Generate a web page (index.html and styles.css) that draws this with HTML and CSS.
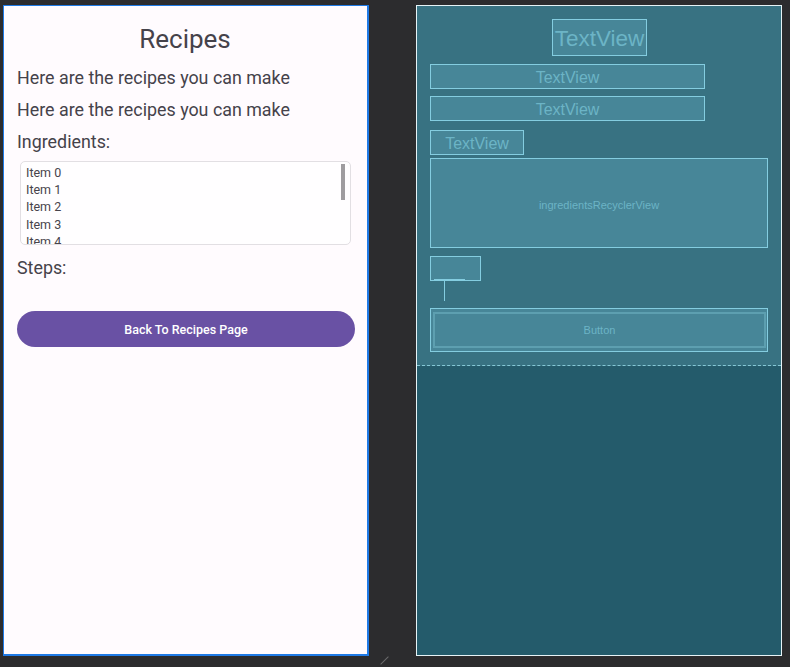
FILE: index.html
```html
<!DOCTYPE html>
<html>
<head>
<meta charset="utf-8">
<link rel="stylesheet" href="styles.css">
</head>
<body>
<div class="stage">
  <div class="phone">
    <div class="title">Recipes</div>
    <div class="line l1">Here are the recipes you can make</div>
    <div class="line l2">Here are the recipes you can make</div>
    <div class="line l3">Ingredients:</div>
    <div class="list">
      <div class="items">
        <div class="item">Item 0</div>
        <div class="item">Item 1</div>
        <div class="item">Item 2</div>
        <div class="item">Item 3</div>
        <div class="item">Item 4</div>
      </div>
      <div class="scrollbar"></div>
    </div>
    <div class="line steps">Steps:</div>
    <div class="btn">Back To Recipes Page</div>
  </div>
  <div class="handle"></div>
  <div class="blueprint">
    <div class="bp-top">
      <div class="bp bp-title">TextView</div>
      <div class="bp bp-tv bp-tv1">TextView</div>
      <div class="bp bp-tv bp-tv2">TextView</div>
      <div class="bp bp-tv bp-tv3">TextView</div>
      <div class="bp bp-rv">ingredientsRecyclerView</div>
      <div class="bp bp-small"><span class="bp-under"></span></div>
      <div class="bp-stem"></div>
      <div class="bp bp-btn"><div class="bp-btn-inner">Button</div></div>
    </div>
  </div>
</div>
</body>
</html>
```
FILE: styles.css
```css
* { box-sizing: border-box; }
html, body { margin: 0; padding: 0; }
body {
  background: #2c2c2e;
  width: 790px;
  height: 667px;
  overflow: hidden;
}
.stage {
  position: relative;
  display: flex;
  gap: 47px;
  padding: 5px 0 0 3px;
}
.phone {
  width: 366px;
  height: 651px;
  background: #fffbfe;
  border: 1px solid #1f7ae6;
  border-right-width: 2px;
  border-bottom-width: 2px;
  padding: 17px 13px 0 13px;
  font-family: Roboto, "Liberation Sans", sans-serif;
  color: #45424a;
  display: flex;
  flex-direction: column;
}
.title {
  font-size: 26px;
  line-height: 32px;
  text-align: center;
  padding-right: 1px;
}
.line {
  font-size: 17.85px;
  line-height: 24px;
}
.l1 { margin-top: 11px; }
.l2 { margin-top: 8px; }
.l3 { margin-top: 8px; }
.list {
  margin: 7px 3px 0 3px;
  height: 84px;
  border: 1px solid #e2dfe3;
  border-radius: 5px;
  background: #fffeff;
  display: flex;
  overflow: hidden;
  position: relative;
}
.items {
  flex: 1;
  padding: 2px 0 0 5px;
  font-size: 12.5px;
  line-height: 17.2px;
  color: #47444c;
}
.scrollbar {
  width: 4px;
  height: 36px;
  margin: 2px 5px 0 0;
  background: #9e9c9f;
}
.steps { margin-top: 11px; }
.btn {
  margin-top: 31px;
  height: 36px;
  border-radius: 18px;
  background: #6951a4;
  color: #ffffff;
  font-size: 12.5px;
  font-weight: 500;
  display: flex;
  align-items: center;
  justify-content: center;
  margin-right: -1px;
}
.handle {
  position: absolute;
  left: 379px;
  top: 660px;
  width: 11px;
  height: 1px;
  background: #6a6a6c;
  transform: rotate(-45deg);
}
.blueprint {
  width: 366px;
  height: 651px;
  border: 1px solid #e6f3f6;
  background: #245b6b;
  font-family: "Liberation Sans", Arial, sans-serif;
  color: #6cb4c6;
}
.bp-top {
  height: 360px;
  background: #387282;
  border-bottom: 1px dashed #86c8d6;
  padding: 13px 13px 0 13px;
  display: flex;
  flex-direction: column;
  align-items: flex-start;
}
.bp {
  background: #478698;
  border: 1px solid #84cde0;
  display: flex;
  align-items: center;
  justify-content: center;
  white-space: nowrap;
}
.bp-title {
  align-self: center;
  width: 95px;
  height: 37px;
  font-size: 22.5px;
  margin-left: 1px;
  padding-top: 2px;
}
.bp-tv {
  height: 25px;
  font-size: 16px;
  padding-top: 2px;
}
.bp-tv1 { width: 275px; margin-top: 8px; }
.bp-tv2 { width: 275px; margin-top: 7px; }
.bp-tv3 { width: 94px; margin-top: 9px; }
.bp-rv {
  width: 338px;
  height: 90px;
  margin-top: 3px;
  font-size: 11px;
  padding-top: 3px;
}
.bp-small {
  width: 51px;
  height: 25px;
  margin-top: 8px;
  position: relative;
}
.bp-under {
  position: absolute;
  left: 3px;
  bottom: 0;
  width: 31px;
  height: 1px;
  background: #84cde0;
}
.bp-stem {
  width: 1px;
  height: 20px;
  margin-left: 14px;
  background: #84cde0;
}
.bp-btn {
  width: 338px;
  height: 44px;
  margin-top: 7px;
  padding: 3px 1px 3px 2px;
}
.bp-btn-inner {
  width: 100%;
  height: 100%;
  border: 2px solid #5d9fb0;
  display: flex;
  align-items: center;
  justify-content: center;
  font-size: 11px;
}
```
